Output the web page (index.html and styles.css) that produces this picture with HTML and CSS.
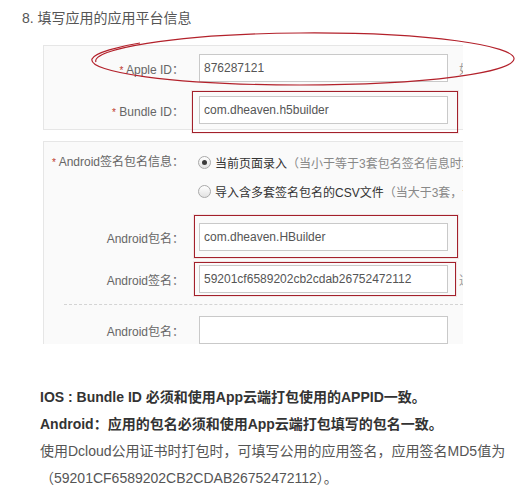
FILE: index.html
```html
<!DOCTYPE html>
<html lang="zh-CN">
<head>
    <meta charset="UTF-8">
    <title>填写应用的应用平台信息</title>
    <link rel="stylesheet" href="styles.css">
</head>
<body>
    <h3 class="step-title">8. 填写应用的应用平台信息</h3>

    <div class="shot">
        <div class="panel panel-ios">
            <div class="form-row">
                <label class="form-label"><span class="req">*</span> Apple ID：</label>
                <input class="field" type="text" value="876287121">
                <span class="hint">如</span>
            </div>
            <div class="form-row">
                <label class="form-label"><span class="req">*</span> Bundle ID：</label>
                <span class="mark mark-bundle">
                    <input class="field" type="text" value="com.dheaven.h5builder">
                </span>
            </div>
        </div>

        <div class="panel panel-android">
            <div class="form-row radio-row">
                <label class="form-label"><span class="req">*</span> Android签名包名信息：</label>
                <div class="radio-list">
                    <div class="radio-item">
                        <span class="radio on"></span>
                        <span class="radio-text">当前页面录入</span><span class="radio-note">（当小于等于3套包名签名信息时填写）</span>
                    </div>
                    <div class="radio-item">
                        <span class="radio"></span>
                        <span class="radio-text">导入含多套签名包名的CSV文件</span><span class="radio-note">（当大于3套，请使用）</span>
                    </div>
                </div>
            </div>

            <div class="form-row row-package">
                <label class="form-label">Android包名：</label>
                <span class="mark mark-package">
                    <input class="field" type="text" value="com.dheaven.HBuilder">
                </span>
            </div>
            <div class="form-row row-sign">
                <label class="form-label">Android签名：</label>
                <span class="mark mark-sign">
                    <input class="field" type="text" value="59201cf6589202cb2cdab26752472112">
                </span>
                <span class="hint">通</span>
            </div>

            <div class="divider"></div>

            <div class="form-row">
                <label class="form-label">Android包名：</label>
                <input class="field" type="text" value="">
            </div>
        </div>
    </div>

    <div class="notes">
        <p class="strong">IOS : Bundle ID 必须和使用App云端打包使用的APPID一致。</p>
        <p class="strong">Android：应用的包名必须和使用App云端打包填写的包名一致。</p>
        <p>使用Dcloud公用证书时打包时，可填写公用的应用签名，应用签名MD5值为</p>
        <p>（59201CF6589202CB2CDAB26752472112）。</p>
    </div>

    <!-- hand drawn ring round the Apple ID row -->
    <svg class="ring" width="525" height="100" viewBox="0 0 525 100">
        <path d="M 96 62 C 90 50, 170 34, 300 33 C 430 32, 516 46, 514 59 C 512 72, 430 85, 300 85 C 170 85, 88 72, 92 59 C 94 53, 120 46, 140 43"
              fill="none" stroke="#b3212b" stroke-width="1.2"/>
    </svg>
</body>
</html>
```

FILE: styles.css
```css
* {
    box-sizing: border-box;
}

body {
    margin: 0;
    position: relative;
    font-family: 'Liberation Sans', 'Noto Sans CJK SC', sans-serif;
    background: white;
    color: #555;
}

.step-title {
    margin: 0;
    padding: 9px 0 0 22px;
    font-size: 14px;
    line-height: 18px;
    font-weight: normal;
    color: #555;
}

.shot {
    margin: 18px 0 0 43px;
    width: 420px;
    overflow: hidden;
}

.panel {
    background: #fafafa;
    border: 1px solid #e6e6e6;
    border-right: none;
}

.panel-ios {
    padding: 8px 0 5px;
}

.panel-android {
    margin-top: 11px;
    padding-top: 6px;
    border-bottom: none;
}

.form-row {
    display: flex;
    align-items: center;
    white-space: nowrap;
    font-size: 12px;
}

.panel-ios .form-row + .form-row {
    margin-top: 14px;
}

.form-label {
    width: 140px;
    flex-shrink: 0;
    margin-right: 15px;
    text-align: right;
    color: #666;
    font-size: 12px;
}

.req {
    color: #c0392b;
    font-size: 10px;
}

.field {
    width: 249px;
    height: 28px;
    flex-shrink: 0;
    padding: 0 4px;
    border: 1px solid #c9c9c9;
    background: white;
    font-family: inherit;
    font-size: 12px;
    color: #555;
}

.hint {
    margin-left: 11px;
    color: #999;
    font-size: 12px;
}

/* red boxes drawn over the screenshot */
.mark {
    display: inline-flex;
    flex-shrink: 0;
    border: 1px solid #a3202b;
    box-shadow: 0 0 0 1px rgba(200, 80, 80, 0.12);
}

.mark-bundle {
    margin: -5px -10px -9px -7px;
    padding: 4px 9px 8px 6px;
}

.mark-package {
    margin: -8px -10px -7px -5px;
    padding: 7px 9px 6px 4px;
}

.mark-sign {
    margin: -3px -8px -3px -5px;
    padding: 2px 7px 2px 4px;
}

.radio-row {
    align-items: flex-start;
}

.radio-row .form-label {
    line-height: 29px;
}

.radio-list {
    display: flex;
    flex-direction: column;
}

.radio-item {
    display: flex;
    align-items: center;
    height: 29px;
    margin-left: -1px;
}

.radio {
    width: 13px;
    height: 13px;
    margin-right: 4px;
    border: 1px solid #a9a9a9;
    border-radius: 50%;
    background: linear-gradient(#ffffff, #e2e2e2);
    display: flex;
    align-items: center;
    justify-content: center;
}

.radio.on::after {
    content: '';
    width: 5px;
    height: 5px;
    border-radius: 50%;
    background: #3a3a3a;
}

.radio-text {
    color: #333;
}

.radio-note {
    color: #888;
}

.row-package {
    margin-top: 17px;
}

.row-sign {
    margin-top: 14px;
}

.divider {
    margin: 11px 0 11px 20px;
    border-top: 1px dashed #d4d4d4;
}

.notes {
    margin-top: 40px;
    padding-left: 40px;
    font-size: 14px;
    line-height: 27px;
}

.notes p {
    margin: 0;
    color: #555;
}

.notes .strong {
    font-weight: bold;
    color: #333;
}

.ring {
    position: absolute;
    top: 0;
    left: 0;
    pointer-events: none;
}
```
